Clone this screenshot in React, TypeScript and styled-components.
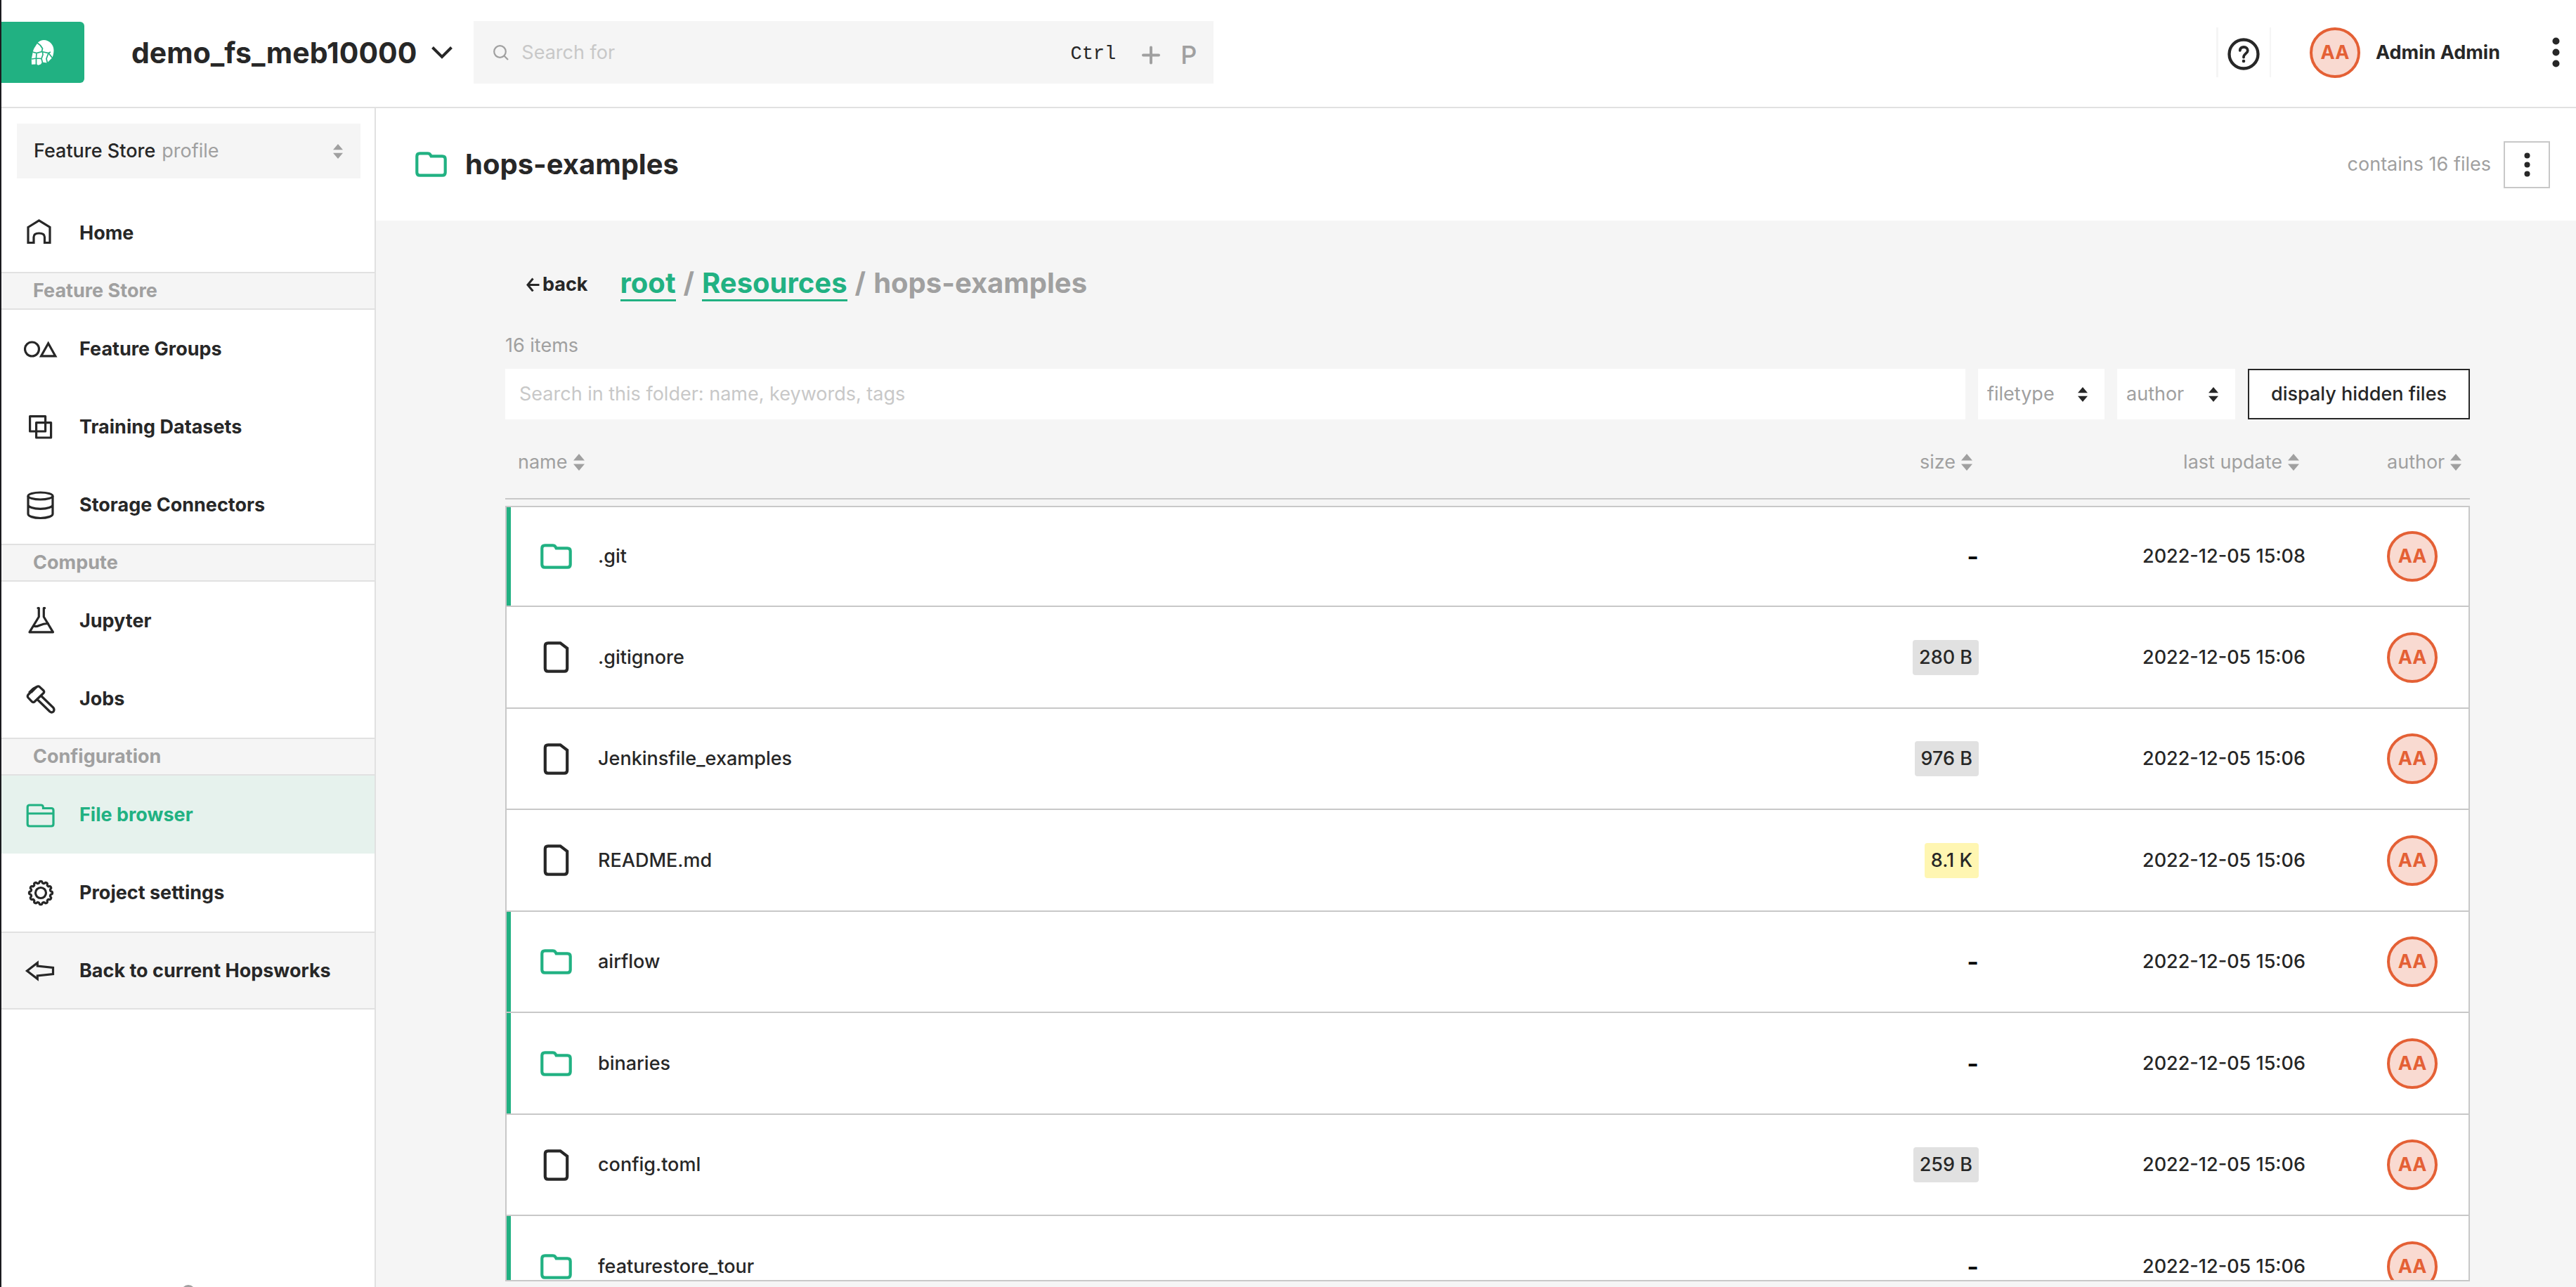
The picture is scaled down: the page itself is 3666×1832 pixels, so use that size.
import React from "react";
import styled, { createGlobalStyle, css } from "styled-components";

const color = {
  text: "#272727",
  green: "#21b182",
  greenSoft: "#e6f2ed",
  gray: "#a0a0a0",
  grayMid: "#c8c8c8",
  line: "#e1e1e1",
  soft: "#f5f5f5",
  orange: "#e46035",
  orangeSoft: "#f9dad1",
  yellow: "#fff6b2",
};

const GlobalStyle = createGlobalStyle`
  *, *::before, *::after { box-sizing: border-box; }
  body {
    margin: 0;
    background: ${color.soft};
    color: ${color.text};
    font-family: Inter, "Liberation Sans", sans-serif;
    font-size: 27px;
    line-height: 34px;
  }
  button, input, select {
    font: inherit;
    color: inherit;
    margin: 0;
    padding: 0;
    border: 0;
    border-radius: 0;
    background: none;
  }
  button, select { cursor: pointer; }
  svg { display: block; flex: none; }
`;

/* ---------- layout ---------- */

const Shell = styled.div`
  display: flex;
  flex-direction: column;
  height: 100vh;
  overflow: hidden;
  border-left: 2px solid #1b1b1f;
`;

const TopBar = styled.header`
  display: flex;
  align-items: center;
  flex: none;
  padding: 30px 23px 33px 0;
  background: #fff;
  border-bottom: 2px solid ${color.line};
`;

const Body = styled.div`
  display: flex;
  flex: 1;
  min-height: 0;
`;

const Sidebar = styled.nav`
  display: flex;
  flex-direction: column;
  flex: none;
  width: 533px;
  background: #fff;
  border-right: 2px solid ${color.line};
`;

const Main = styled.main`
  display: flex;
  flex-direction: column;
  flex: 1;
  min-width: 0;
`;

/* ---------- top bar ---------- */

const LogoLink = styled.a`
  display: flex;
  align-items: center;
  justify-content: center;
  width: 118px;
  height: 87px;
  background: ${color.green};
  border-radius: 0 6px 6px 0;
`;

const ProjectButton = styled.button`
  display: flex;
  align-items: center;
  gap: 21px;
  margin: 0 30px 0 67px;
  font-size: 41px;
  line-height: 48px;
  font-weight: 700;
`;

const SearchBox = styled.label`
  display: flex;
  align-items: center;
  width: 1053px;
  height: 89px;
  padding: 0 24px 0 28px;
  background: ${color.soft};
  color: ${color.gray};
`;

const SearchInput = styled.input`
  flex: 1;
  min-width: 0;
  margin-left: 18px;
  outline: 0;
  color: ${color.text};
  &::placeholder { color: ${color.grayMid}; opacity: 1; }
`;

const CtrlKey = styled.kbd`
  margin-right: 36px;
  padding-top: 4px;
  font-family: "Liberation Mono", monospace;
  font-size: 27px;
  color: ${color.text};
`;

const KeyTail = styled.span`
  display: flex;
  align-items: center;
  gap: 28px;
  padding-top: 6px;
`;

const LetterKey = styled.kbd`
  font-family: inherit;
  font-size: 36px;
  font-weight: 500;
`;

const TopRight = styled.div`
  display: flex;
  align-items: center;
  margin-left: auto;
`;

const HelpButton = styled.button`
  display: flex;
  align-items: center;
  justify-content: center;
  width: 78px;
  height: 71px;
  margin-right: 55px;
  border-left: 3px solid ${color.soft};
  border-right: 2px solid ${color.soft};
`;

const Avatar = styled.span`
  display: flex;
  align-items: center;
  justify-content: center;
  flex: none;
  width: 72px;
  height: 72px;
  border: 4px solid ${color.orange};
  border-radius: 50%;
  background: ${color.orangeSoft};
  color: ${color.orange};
  font-weight: 700;
`;

const UserButton = styled.button`
  display: flex;
  align-items: center;
  gap: 22px;
  font-weight: 700;
`;

const MenuButton = styled.button`
  margin-left: 74px;
`;

/* ---------- sidebar ---------- */

const ProfileButton = styled.button`
  display: flex;
  align-items: center;
  height: 78px;
  margin: 22px 20px 22px 22px;
  padding: 0 25px 0 24px;
  background: ${color.soft};
  font-weight: 500;
`;

const ProfileHint = styled.span`
  flex: 1;
  margin-left: 9px;
  text-align: left;
  font-weight: 400;
  color: ${color.gray};
`;

const NavLink = styled.a<{ $active?: boolean; $boxed?: boolean }>`
  display: flex;
  align-items: center;
  gap: 31px;
  height: 111px;
  padding-left: 32px;
  font-weight: 700;
  text-decoration: none;
  color: ${(p) => (p.$active ? color.green : color.text)};
  background: ${(p) => (p.$active ? color.greenSoft : "transparent")};
  ${(p) =>
    p.$boxed &&
    css`
      background: ${color.soft};
      border-top: 2px solid ${color.line};
      border-bottom: 2px solid ${color.line};
    `}
`;

const NavHeading = styled.h2`
  display: flex;
  align-items: center;
  height: 54px;
  margin: 0;
  padding-left: 45px;
  font-size: 27px;
  font-weight: 700;
  color: ${color.gray};
  background: ${color.soft};
  border-top: 2px solid ${color.line};
  border-bottom: 2px solid ${color.line};
`;

const SidebarFooter = styled.div`
  display: flex;
  justify-content: center;
  height: 3px;
  margin-top: auto;
  overflow: hidden;
`;

const FooterDot = styled.span`
  flex: none;
  width: 20px;
  height: 20px;
  border-radius: 50%;
  background: ${color.gray};
`;

/* ---------- folder page ---------- */

const PageHeader = styled.div`
  display: flex;
  align-items: center;
  flex: none;
  height: 160px;
  padding: 0 37px 0 56px;
  background: #fff;
`;

const PageTitle = styled.h1`
  flex: 1;
  margin: 0 0 0 26px;
  font-size: 40px;
  line-height: 48px;
  font-weight: 700;
`;

const PageNote = styled.span`
  margin-right: 18px;
  color: ${color.gray};
`;

const SquareButton = styled.button`
  display: flex;
  align-items: center;
  justify-content: center;
  width: 66px;
  height: 67px;
  border: 2px solid ${color.grayMid};
`;

const Content = styled.div`
  display: flex;
  flex-direction: column;
  flex: 1;
  min-height: 0;
  padding: 66px 151px 8px 184px;
`;

const PathRow = styled.div`
  display: flex;
  align-items: center;
  gap: 46px;
  padding-left: 30px;
`;

const BackButton = styled.button`
  display: flex;
  align-items: center;
  gap: 4px;
  font-weight: 700;
`;

const Crumbs = styled.div`
  display: flex;
  align-items: flex-start;
  gap: 11px;
  font-size: 40px;
  line-height: 46px;
  font-weight: 700;
  color: ${color.gray};
`;

const CrumbLink = styled.a`
  color: ${color.green};
  text-decoration: none;
  border-bottom: 3px solid ${color.green};
`;

const Count = styled.p`
  margin: 46px 0 16px;
  color: ${color.gray};
`;

const Toolbar = styled.div`
  display: flex;
  gap: 18px;
  height: 72px;
  flex: none;
`;

const FolderSearch = styled.input`
  flex: 1;
  min-width: 0;
  padding: 0 20px;
  background: #fff;
  outline: 0;
  &::placeholder { color: ${color.grayMid}; opacity: 1; }
`;

const SelectBox = styled.div<{ $width: number }>`
  display: grid;
  align-items: center;
  width: ${(p) => p.$width}px;
  background: #fff;
  & > * { grid-area: 1 / 1; }
  & > svg {
    justify-self: end;
    margin-right: 24px;
    pointer-events: none;
  }
`;

const Select = styled.select`
  appearance: none;
  width: 100%;
  height: 100%;
  padding-left: 13px;
  color: ${color.gray};
  outline: 0;
`;

const OutlineButton = styled.button`
  width: 316px;
  background: #fff;
  border: 2px solid ${color.text};
  font-weight: 500;
`;

const FileTable = styled.table`
  display: flex;
  flex-direction: column;
  flex: 1;
  min-height: 0;
`;

const rowGrid = css`
  display: grid;
  grid-template-columns: 1fr 160px 349px 116px;
  column-gap: 116px;
  align-items: center;
`;

const Head = styled.thead`
  display: block;
  flex: none;
  margin-bottom: 9px;
`;

const HeadRow = styled.tr`
  ${rowGrid}
  padding: 44px 2px 34px;
  border-bottom: 2px solid ${color.grayMid};
`;

const HeadCell = styled.th<{ $align?: string }>`
  display: flex;
  justify-content: ${(p) => p.$align ?? "flex-start"};
  padding: 0 9px 0 0;
  font-weight: 400;
  color: ${color.gray};
  &:first-child { padding-left: 16px; }
`;

const SortButton = styled.button`
  display: flex;
  align-items: center;
  gap: 8px;
`;

const Rows = styled.tbody`
  display: block;
  flex: 1;
  min-height: 0;
  overflow: hidden;
  border: 2px solid ${color.grayMid};
  background: #fff;
`;

const Row = styled.tr<{ $folder: boolean }>`
  ${rowGrid}
  height: 144px;
  border-bottom: 2px solid ${color.grayMid};
  box-shadow: ${(p) => (p.$folder ? `inset 6px 0 ${color.green}` : "none")};
  &:nth-child(even) { height: 145px; }
  &:first-child { height: 142px; }
`;

const Cell = styled.td<{ $align?: string }>`
  display: flex;
  align-items: center;
  justify-content: ${(p) => p.$align ?? "flex-start"};
  padding: 0;
  font-weight: 500;
`;

const NameCell = styled(Cell)`
  gap: 37px;
  padding-left: 48px;
`;

const Size = styled.span<{ $tone: string }>`
  padding: 8px 9px;
  border-radius: 4px;
  background: ${(p) => p.$tone};
`;

const Dash = styled.span`
  font-size: 36px;
  font-weight: 600;
  color: #000;
`;

/* ---------- icons ---------- */

const SortIcon = ({ w = 16, h = 24, fill = color.gray }: { w?: number; h?: number; fill?: string }) => (
  <svg width={w} height={h} viewBox="0 0 16 24" fill={fill} aria-hidden="true">
    <path d="M8 0 16 9.500H0zM8 24 0 14.500H16z" />
  </svg>
);

const Dots = ({ r, step }: { r: number; step: number }) => {
  const w = r * 2 + 1;
  const h = step * 2 + w;
  return (
    <svg width={w} height={h} viewBox={`0 0 ${w} ${h}`} fill={color.text} aria-hidden="true">
      {[0, 1, 2].map((i) => (
        <circle key={i} cx={w / 2} cy={w / 2 + i * step} r={r} />
      ))}
    </svg>
  );
};

const FolderIcon = () => (
  <svg width="45" height="36" viewBox="0 0 45 36" fill="none" stroke={color.green} strokeWidth="4.200" aria-hidden="true">
    <path d="M2.300 6.500Q2.300 2.300 6.500 2.300H17.500Q20.500 2.300 21.600 4.500L22.600 6.400H38.500Q42.700 6.400 42.700 10.600V29.400Q42.700 33.600 38.500 33.600H6.500Q2.300 33.600 2.300 29.400Z" />
  </svg>
);

const FileIcon = () => (
  <svg width="45" height="45" viewBox="0 0 45 45" fill="none" stroke={color.text} strokeWidth="4.200" aria-hidden="true">
    <path d="M6.800 6.500Q6.800 2.300 11 2.300H28.400L38.200 9.800V38.500Q38.200 42.700 34 42.700H11Q6.800 42.700 6.800 38.500Z" />
  </svg>
);

const LogoIcon = () => (
  <svg width="34" height="36" viewBox="0 0 34 36" aria-hidden="true">
    <path fill="#fff" d="M9.500 4C12 1.500 15 0 18.500 0 26 0 32.500 6.500 32.500 14.500 32.500 18.500 31.500 22 30.500 25L23 32.500 16 31.500 14 34.500 10.500 35.700 8 34.500 1 34.700 0.800 27 2.500 18.500C3 15 4 12 6 9.500Z" />
    <path
      fill="none"
      stroke={color.green}
      strokeWidth="1.700"
      d="M9 4Q14 7 16.500 12L15.500 16.500 8 18.500 2.500 17M15.500 16.500 25 18.500 28 17M25 18.500 31 26M25 18.500 22 26.500 23.500 33M16.500 16.500 17 21 15 26.500M15 26.500 8 26 1 27M8 18.500 7.500 26 7.500 35M15 26.500 16.500 32"
    />
  </svg>
);

const Chevron = () => (
  <svg width="30" height="18" viewBox="0 0 30 18" fill="none" stroke={color.text} strokeWidth="4" aria-hidden="true">
    <path d="M1.500 1.500 15 15 28.500 1.500" />
  </svg>
);

const SearchIcon = () => (
  <svg width="22" height="22" viewBox="0 0 22 22" fill="none" stroke={color.gray} strokeWidth="2.200" aria-hidden="true">
    <circle cx="9.500" cy="9.500" r="8.300" />
    <path d="M15.500 15.500 21 21" />
  </svg>
);

const PlusIcon = () => (
  <svg width="28" height="28" viewBox="0 0 28 28" fill="none" stroke={color.gray} strokeWidth="4" strokeLinecap="round" aria-hidden="true">
    <path d="M14 3.500V25.500M3 14.500H25" />
  </svg>
);

const HelpIcon = () => (
  <svg width="46" height="50" viewBox="0 0 46 50" fill="none" stroke={color.text} strokeWidth="4.300" strokeLinecap="round" strokeLinejoin="round" aria-hidden="true">
    <circle cx="23" cy="27" r="20.500" />
    <path strokeWidth="3.800" d="M17.800 21.800C18 18.500 20.500 17 23.300 17 26.500 17 28.800 19 28.800 22 28.800 26 23 26.500 23 31.500" />
    <circle cx="23" cy="37" r="2.300" fill={color.text} stroke="none" />
  </svg>
);

const BackArrow = () => (
  <svg width="19" height="20" viewBox="0 0 19 20" fill="none" stroke={color.text} strokeWidth="3" aria-hidden="true">
    <path d="M9.500 1.500 2 10.500 9.500 19.500M2 10.500H18.500" />
  </svg>
);

const NavIcon = ({ children }: { children: React.ReactNode }) => (
  <svg width="48" height="48" viewBox="0 0 48 48" fill="none" stroke="currentColor" strokeWidth="3.200" aria-hidden="true">
    {children}
  </svg>
);

const gearPath = (() => {
  const teeth = 12;
  const points: string[] = [];
  for (let i = 0; i <= 144; i++) {
    const a = (i / 144) * Math.PI * 2 - Math.PI / 2;
    const r = 15.3 + 1.3 * Math.tanh(2 * Math.cos(a * teeth + (teeth * Math.PI) / 2));
    points.push(`${(24 + r * Math.cos(a)).toFixed(2)} ${(24 + r * Math.sin(a)).toFixed(2)}`);
  }
  return `M${points.join("L")}Z`;
})();

const icons: Record<string, React.ReactNode> = {
  home: <path d="M6 15.500 21.500 6 37 15.500V37.500H29.500V29.500Q29.500 24 21.500 24 14 24 14 29.500V37.500H6Z" />,
  groups: (
    <>
      <circle cx="11.500" cy="24" r="10" />
      <path d="M24.600 33.800 34.700 15.700 44.800 33.800Z" />
    </>
  ),
  datasets: <path strokeLinejoin="round" d="M8.600 8.600H30.600V30H8.600ZM17.600 17.600H38.600V39H17.600Z" />,
  storage: (
    <>
      <ellipse cx="23.500" cy="11" rx="17.500" ry="5" />
      <path d="M6 11V36.500C6 39.500 13 42.500 23.500 42.500S41 39.500 41 36.500V11M6 23.500C6 26.500 13 29.300 23.500 29.300S41 26.500 41 23.500" />
    </>
  ),
  jupyter: (
    <path strokeLinecap="round" strokeLinejoin="round" d="M20 5.500H21.300V18L8 39.800H41.500L28.300 18V5.500H29.700M14 31C20 34 23 27 34.500 27.500" />
  ),
  jobs: (
    <>
      <path strokeLinejoin="round" d="M18.500 6.500Q20.500 5 22.500 6.800L28 12Q29.500 14 28 15.500L15.500 27.500Q13.500 29.500 11.500 27.800L6 22Q4.500 20 6 18L9.500 14.500 14 9Z" />
      <path fill="currentColor" d="M9 13.500 13 9.500 16 9 11 14Z" />
      <path strokeLinejoin="round" d="M24.500 19.500 42 36.500Q44 39.500 42 42 39.500 44 37 42L19.500 25" />
    </>
  ),
  files: (
    <path d="M5.200 13Q5.200 10 8.200 10H25Q27.500 10 27.500 14.500H39Q42 14.500 42 17.500V37Q42 40 39 40H8.200Q5.200 40 5.200 37ZM5.200 22H42" />
  ),
  settings: (
    <>
      <path strokeLinejoin="round" d={gearPath} />
      <circle cx="24" cy="24" r="7.500" />
    </>
  ),
  back: <path d="M4.500 24 19.300 12.500V17L41.500 19.500V28.500L19.300 31V35.500Z" />,
};

/* ---------- data ---------- */

type NavEntry = { label: string; icon?: string; active?: boolean; boxed?: boolean };

const nav: NavEntry[] = [
  { label: "Home", icon: "home" },
  { label: "Feature Store" },
  { label: "Feature Groups", icon: "groups" },
  { label: "Training Datasets", icon: "datasets" },
  { label: "Storage Connectors", icon: "storage" },
  { label: "Compute" },
  { label: "Jupyter", icon: "jupyter" },
  { label: "Jobs", icon: "jobs" },
  { label: "Configuration" },
  { label: "File browser", icon: "files", active: true },
  { label: "Project settings", icon: "settings" },
  { label: "Back to current Hopsworks", icon: "back", boxed: true },
];

type FileEntry = { name: string; size?: string; large?: boolean; updated: string };

const files: FileEntry[] = [
  { name: ".git", updated: "2022-12-05 15:08" },
  { name: ".gitignore", size: "280 B", updated: "2022-12-05 15:06" },
  { name: "Jenkinsfile_examples", size: "976 B", updated: "2022-12-05 15:06" },
  { name: "README.md", size: "8.1 K", large: true, updated: "2022-12-05 15:06" },
  { name: "airflow", updated: "2022-12-05 15:06" },
  { name: "binaries", updated: "2022-12-05 15:06" },
  { name: "config.toml", size: "259 B", updated: "2022-12-05 15:06" },
  { name: "featurestore_tour", updated: "2022-12-05 15:06" },
];

const columns = [
  { label: "name" },
  { label: "size", align: "flex-end" },
  { label: "last update", align: "flex-end" },
  { label: "author" },
];

export default function App() {
  return (
    <Shell>
      <GlobalStyle />
      <TopBar>
        <LogoLink href="#" aria-label="Hopsworks">
          <LogoIcon />
        </LogoLink>
        <ProjectButton type="button">
          demo_fs_meb10000
          <Chevron />
        </ProjectButton>
        <SearchBox>
          <SearchIcon />
          <SearchInput type="text" placeholder="Search for" aria-label="Search for" />
          <CtrlKey>Ctrl</CtrlKey>
          <KeyTail>
            <PlusIcon />
            <LetterKey>P</LetterKey>
          </KeyTail>
        </SearchBox>
        <TopRight>
          <HelpButton type="button" aria-label="Help">
            <HelpIcon />
          </HelpButton>
          <UserButton type="button">
            <Avatar>AA</Avatar>
            Admin Admin
          </UserButton>
          <MenuButton type="button" aria-label="Menu">
            <Dots r={5} step={16} />
          </MenuButton>
        </TopRight>
      </TopBar>
      <Body>
        <Sidebar>
          <ProfileButton type="button">
            Feature Store
            <ProfileHint>profile</ProfileHint>
            <SortIcon w={14} h={21} />
          </ProfileButton>
          {nav.map((entry) =>
            entry.icon ? (
              <NavLink key={entry.label} href="#" $active={entry.active} $boxed={entry.boxed}>
                <NavIcon>{icons[entry.icon]}</NavIcon>
                {entry.label}
              </NavLink>
            ) : (
              <NavHeading key={entry.label}>{entry.label}</NavHeading>
            )
          )}
          <SidebarFooter>
            <FooterDot />
          </SidebarFooter>
        </Sidebar>
        <Main>
          <PageHeader>
            <FolderIcon />
            <PageTitle>hops-examples</PageTitle>
            <PageNote>contains 16 files</PageNote>
            <SquareButton type="button" aria-label="Folder actions">
              <Dots r={4} step={13} />
            </SquareButton>
          </PageHeader>
          <Content>
            <PathRow>
              <BackButton type="button">
                <BackArrow />
                back
              </BackButton>
              <Crumbs>
                <CrumbLink href="#">root</CrumbLink>
                <span>/</span>
                <CrumbLink href="#">Resources</CrumbLink>
                <span>/</span>
                <span>hops-examples</span>
              </Crumbs>
            </PathRow>
            <Count>16 items</Count>
            <Toolbar>
              <FolderSearch
                type="text"
                placeholder="Search in this folder: name, keywords, tags"
                aria-label="Search in this folder"
              />
              <SelectBox $width={180}>
                <Select aria-label="filetype">
                  <option>filetype</option>
                </Select>
                <SortIcon w={14} h={21} fill={color.text} />
              </SelectBox>
              <SelectBox $width={168}>
                <Select aria-label="author">
                  <option>author</option>
                </Select>
                <SortIcon w={14} h={21} fill={color.text} />
              </SelectBox>
              <OutlineButton type="button">dispaly hidden files</OutlineButton>
            </Toolbar>
            <FileTable>
              <Head>
                <HeadRow>
                  {columns.map((column) => (
                    <HeadCell key={column.label} $align={column.align} scope="col">
                      <SortButton type="button">
                        {column.label}
                        <SortIcon />
                      </SortButton>
                    </HeadCell>
                  ))}
                </HeadRow>
              </Head>
              <Rows>
                {files.map((file) => (
                  <Row key={file.name} $folder={!file.size}>
                    <NameCell>
                      {file.size ? <FileIcon /> : <FolderIcon />}
                      {file.name}
                    </NameCell>
                    <Cell $align="flex-end">
                      {file.size ? (
                        <Size $tone={file.large ? color.yellow : color.line}>{file.size}</Size>
                      ) : (
                        <Dash>-</Dash>
                      )}
                    </Cell>
                    <Cell $align="flex-end">{file.updated}</Cell>
                    <Cell>
                      <Avatar>AA</Avatar>
                    </Cell>
                  </Row>
                ))}
              </Rows>
            </FileTable>
          </Content>
        </Main>
      </Body>
    </Shell>
  );
}
